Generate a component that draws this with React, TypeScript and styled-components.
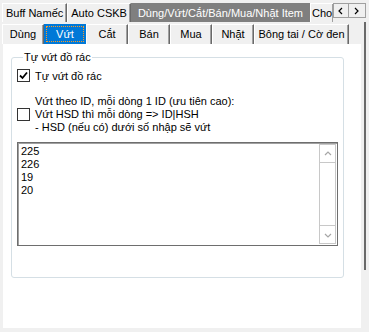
import React from "react";
import styled, { createGlobalStyle, css } from "styled-components";

const Global = createGlobalStyle`
  html, body {
    margin: 0;
    padding: 0;
    background: #f0f0f0;
  }
  body {
    font-family: "Liberation Sans", Arial, sans-serif;
    font-size: 11px;
    color: #000;
  }
`;

// Cửa sổ chính
const Window = styled.div`
  width: 369px;
  height: 332px;
  background: #f0f0f0;
  overflow: hidden;
  display: flex;
  flex-direction: column;
`;

// Thanh tab ngoài
const OuterStrip = styled.div`
  height: 22px;
  display: flex;
  align-items: flex-end;
`;

const OuterTabs = styled.div`
  width: 333px;
  height: 19px;
  display: flex;
  overflow: hidden;
  padding-left: 2px;
  box-sizing: border-box;
`;

const OuterTab = styled.div<{ $active?: boolean; $pad?: number }>`
  flex: none;
  height: 19px;
  line-height: 18px;
  padding: 0 ${(p) => p.$pad ?? 4}px;
  box-sizing: border-box;
  white-space: nowrap;
  font-size: 11px;
  border-top: 1px solid #fff;
  border-left: 1px solid #fff;
  border-right: 1px solid #696969;
  box-shadow: inset -1px 0 #a0a0a0;
  ${(p) =>
    p.$active &&
    css`
      background: #7f7f7f;
      color: #fff;
      border-color: #7f7f7f;
      box-shadow: none;
    `}
`;

const Scroller = styled.div`
  display: flex;
  align-self: flex-start;
  margin-top: 3px;
`;

const ScrollBtn = styled.div`
  width: 16px;
  height: 15px;
  box-sizing: border-box;
  border: 1px solid #a0a0a0;
  background: #f0f0f0;
  display: flex;
  align-items: center;
  justify-content: center;
  & + & {
    border-left: none;
    width: 17px;
  }
`;

// Phần thân
const Body = styled.div`
  flex: 1;
  display: flex;
`;

const InnerControl = styled.div`
  width: 361px;
  display: flex;
  flex-direction: column;
`;

const EdgeLine = styled.div`
  width: 2px;
  margin-left: 3px;
  height: 248px;
  background: #6a6a6a;
`;

// Tab trong
const InnerTabs = styled.div`
  height: 22px;
  display: flex;
  align-items: flex-end;
  padding-left: 2px;
`;

const InnerTab = styled.div<{ $w: number; $active?: boolean }>`
  width: ${(p) => p.$w}px;
  height: 20px;
  line-height: 19px;
  box-sizing: border-box;
  text-align: center;
  white-space: nowrap;
  border-top: 1px solid #fff;
  border-left: 1px solid #fff;
  border-right: 1px solid #696969;
  box-shadow: inset -1px 0 #a0a0a0;
  ${(p) =>
    p.$active &&
    css`
      background: #0078d7;
      color: #fff;
      border-color: #0078d7;
      box-shadow: none;
      outline: 1px dotted #ff9a1f;
      outline-offset: -3px;
    `}
`;

const Page = styled.div`
  flex: 1;
  margin: 0 0 4px 3px;
  background: #fff;
`;

const Group = styled.fieldset`
  margin: 7px 0 0 8px;
  width: 332px;
  height: 227px;
  box-sizing: border-box;
  border: 1px solid #d5dfe5;
  border-radius: 3px;
  padding: 0 5px 0 5px;
`;

const Legend = styled.legend`
  padding: 0 1px;
  margin-left: 6px;
  line-height: 13px;
`;

const Row = styled.label<{ $top: number }>`
  display: flex;
  align-items: center;
  gap: 5px;
  margin-top: ${(p) => p.$top}px;
`;

const Box = styled.span`
  width: 13px;
  height: 13px;
  box-sizing: border-box;
  border: 1px solid #333;
  background: #fff;
  flex: none;
  display: flex;
  align-items: center;
  justify-content: center;
`;

const Lines = styled.div`
  line-height: 13px;
  white-space: pre;
`;

const Memo = styled.div`
  margin-top: 8px;
  width: 321px;
  height: 104px;
  box-sizing: border-box;
  border: 1px solid #6e6e6e;
  box-shadow: inset 1px 1px #a0a0a0;
  display: flex;
  padding: 1px;
`;

const MemoText = styled.textarea`
  flex: 1;
  border: none;
  outline: none;
  resize: none;
  overflow: hidden;
  padding: 1px 2px;
  margin: 0;
  font: 11px/13px "Liberation Sans", Arial, sans-serif;
  color: #000;
  background: #fff;
`;

const VScroll = styled.div`
  width: 17px;
  box-sizing: border-box;
  border-left: 1px solid #c8c8c8;
  border-right: 1px solid #c8c8c8;
  display: flex;
  flex-direction: column;
  justify-content: space-between;
`;

const Arrow = styled.div`
  height: 17px;
  border-top: 1px solid #c8c8c8;
  border-bottom: 1px solid #c8c8c8;
  display: flex;
  align-items: center;
  justify-content: center;
`;

const Chevron = ({ dir, color = "#000" }: { dir: "l" | "r" | "u" | "d"; color?: string }) => {
  const d = {
    l: "M5 1 L2 4 L5 7",
    r: "M2 1 L5 4 L2 7",
    u: "M1 5 L4 2 L7 5",
    d: "M1 3 L4 6 L7 3",
  }[dir];
  return (
    <svg width="8" height="8" viewBox="0 0 8 8">
      <path d={d} fill="none" stroke={color} strokeWidth="1.2" />
    </svg>
  );
};

const innerTabs = [
  { t: "Dùng", w: 42 },
  { t: "Vứt", w: 42, active: true },
  { t: "Cắt", w: 42 },
  { t: "Bán", w: 42 },
  { t: "Mua", w: 42 },
  { t: "Nhặt", w: 42 },
  { t: "Bông tai / Cờ đen", w: 95 },
];

export default function App() {
  return (
    <Window>
      <Global />
      <OuterStrip>
        <OuterTabs>
          <OuterTab $pad={3}>Buff Namếc</OuterTab>
          <OuterTab $pad={3}>Auto CSKB</OuterTab>
          <OuterTab $active $pad={6}>Dùng/Vứt/Cắt/Bán/Mua/Nhặt Item</OuterTab>
          <OuterTab $pad={1}>Cho</OuterTab>
        </OuterTabs>
        <Scroller>
          <ScrollBtn>
            <Chevron dir="l" />
          </ScrollBtn>
          <ScrollBtn>
            <Chevron dir="r" />
          </ScrollBtn>
        </Scroller>
      </OuterStrip>
      <Body>
        <InnerControl>
          <InnerTabs>
            {innerTabs.map((x) => (
              <InnerTab key={x.t} $w={x.w} $active={x.active}>
                {x.t}
              </InnerTab>
            ))}
          </InnerTabs>
          <Page>
            <Group>
              <Legend>Tự vứt đồ rác</Legend>
              <Row $top={5}>
                <Box>
                  <svg width="9" height="9" viewBox="0 0 9 9">
                    <path d="M1 4.5 L3.5 7 L8 1.5" fill="none" stroke="#000" strokeWidth="1.8" />
                  </svg>
                </Box>
                <span>Tự vứt đồ rác</span>
              </Row>
              <Row $top={13}>
                <Box />
                <Lines>
                  {"Vứt theo ID, mỗi dòng 1 ID (ưu tiên cao):\nVứt HSD thì mỗi dòng => ID|HSH\n- HSD (nếu có) dưới số nhập sẽ vứt"}
                </Lines>
              </Row>
              <Memo>
                <MemoText readOnly value={"225\n226\n19\n20"} />
                <VScroll>
                  <Arrow>
                    <Chevron dir="u" color="#a6a6a6" />
                  </Arrow>
                  <Arrow>
                    <Chevron dir="d" color="#a6a6a6" />
                  </Arrow>
                </VScroll>
              </Memo>
            </Group>
          </Page>
        </InnerControl>
        <EdgeLine />
      </Body>
    </Window>
  );
}
